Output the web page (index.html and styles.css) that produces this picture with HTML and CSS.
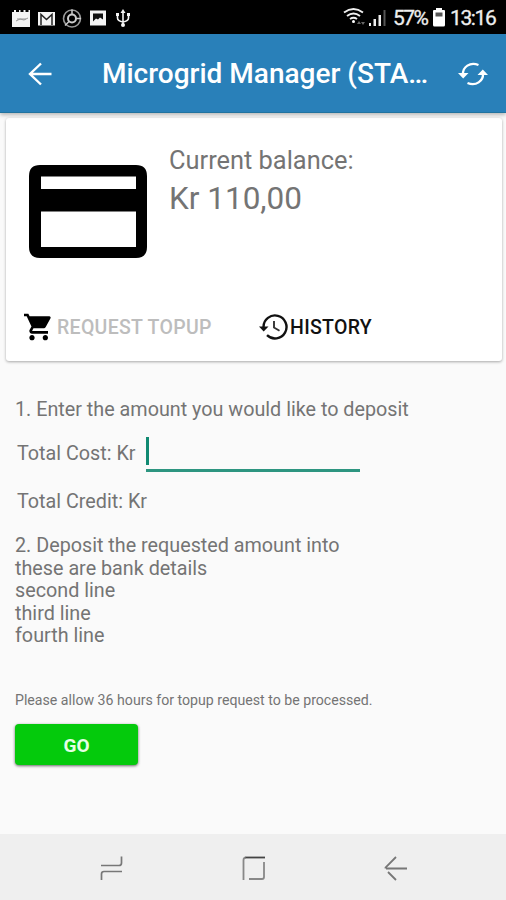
FILE: index.html
```html
<!DOCTYPE html>
<html lang="en">
<head>
<meta charset="utf-8">
<title>Microgrid Manager</title>
<link rel="stylesheet" href="styles.css">
</head>
<body>
<div class="screen">
  <div class="status">
    <svg class="notifications" width="130" height="34" viewBox="0 0 130 34" fill="none">
      <path fill="#f4f4f4" d="M12 11h2V9h2v2h3V9h1.500v2h3V9h2v2h3V9h1.500v17H12z"/>
      <path stroke="#999" d="M16 20l4-2 4 1 4-2M17 18h9"/>
      <path fill="#f4f4f4" d="M38 11h17v13.500H38z"/>
      <path stroke="#222" stroke-width="1.500" d="M41 24V13.500l5.500 5 5.500-5V24"/>
      <circle cx="72" cy="17.500" r="8.500" stroke="#999" stroke-width="1.600"/>
      <circle cx="72" cy="17.500" r="4" stroke="#ccc" stroke-width="2"/>
      <path stroke="#ccc" stroke-width="1.500" d="M72 8.500v5M76 17.500h5M69 20.500l-4 4"/>
      <path fill="#f4f4f4" d="M90 9.500h16v15H90z"/>
      <path fill="#111" d="M93 12.500h10v6l-3-2-2 2-2-1-3 3z"/>
      <path stroke="#f4f4f4" stroke-width="1.600" d="M123 10v14M117.500 14v3q0 3 5.500 4 5.500-1 5.500-4v-3"/>
      <path fill="#f4f4f4" d="M123 8l2.500 4h-5zM116 12h3v3h-3zM127 12h3v3h-3z"/><circle cx="123" cy="24" r="2" fill="#f4f4f4"/>
    </svg>
    <svg class="signals" width="46" height="34" viewBox="0 0 46 34" fill="none">
      <g stroke="#f0f0f0" stroke-width="1.900"><path d="M2 11.500q9.500-7 19 0M5 15q6.500-5 13 0M8 18q3.500-2.500 7 0"/></g>
      <circle cx="11.500" cy="20.500" r="1.500" fill="#fff"/>
      <path fill="#666" d="M15 23l2-3 2 3zM19 21l2 3 2-3z"/>
      <path fill="#eee" d="M27 22h2v3h-2zM31.500 18h2.500v7h-2.500zM36.500 14h2.500v11h-2.500z"/><path fill="#555" d="M41.500 9h2v16h-2z"/>
    </svg>
    <span class="percent">57%</span>
    <svg class="battery" width="12" height="34" viewBox="0 0 12 34"><path fill="#fff" d="M3 7h6v2h2q1 0 1 1v14q0 1.500-1.500 1.500h-9Q0 25.500 0 24V10q0-1 1-1h2z"/><path fill="#555" d="M2.500 11.500h7v4h-7z"/></svg>
    <span class="clock">13:16</span>
  </div>
  <header class="appbar">
    <svg class="back" width="24" height="24" viewBox="0 0 24 24" fill="none" stroke="#fff" stroke-width="2.400"><path d="M23.500 12H2M13 1.500L2 12l11 10.500"/></svg>
    <h1 class="title">Microgrid Manager (STA…</h1>
    <svg class="sync" width="30" height="26" viewBox="0 0 30 26" fill="none"><g stroke="#fff" stroke-width="2.300"><path d="M5 13.500C4.500 6 12 .5 20.500 4M25 12.500c.5 7.500-7 13-15.500 9.500"/></g><path fill="#fff" d="M0 12h10.500L5.200 17.500zM19.500 14h10.500L24.800 8.500z"/></svg>
  </header>
  <main class="content">
    <section class="card">
      <div class="summary">
        <svg class="credit" width="118" height="94" viewBox="0 0 118 94"><path fill-rule="evenodd" d="M11 0h96q11 0 11 11v71q0 11-11 11H11Q0 93 0 82V11Q0 0 11 0zM12 11.500V24h95V11.500zM12 46.500V82h95V46.500z"/></svg>
        <div class="balance"><div class="label">Current balance:</div><div class="amount">Kr 110,00</div></div>
      </div>
      <div class="actions">
        <div class="action topup"><svg width="28" height="28" viewBox="1 2 21 20"><path d="M7 18c-1.100 0-1.990.9-1.990 2S5.900 22 7 22s2-.9 2-2-.9-2-2-2zM1 2v2h2l3.600 7.590-1.350 2.450c-.16.280-.25.610-.25.960 0 1.100.9 2 2 2h12v-2H7.420c-.14 0-.25-.11-.25-.25l.03-.12.9-1.630h7.450c.75 0 1.410-.41 1.750-1.030l3.580-6.490A1 1 0 0 0 20 4H5.210l-.94-2H1zm16 16c-1.100 0-1.990.9-1.990 2s.89 2 1.990 2 2-.9 2-2-.9-2-2-2z"/></svg><span>REQUEST TOPUP</span></div>
        <div class="action history"><svg width="29" height="26" viewBox="0 0 29 26" fill="none" stroke="#111"><path stroke-width="2.400" d="M4.500 13A11.500 11.500 0 1 1 8 21.200"/><path fill="#111" stroke="none" d="M0 12.500h9.500l-4.800 5z"/><path stroke="#333" stroke-width="1.900" d="M15 7v6.500l5.500 3.200"/></svg><span>HISTORY</span></div>
      </div>
    </section>
    <section class="form">
      <p class="step">1. Enter the amount you would like to deposit</p>
      <div class="cost"><span>Total Cost: Kr</span><div class="field"><i class="caret"></i></div></div>
      <p class="total">Total Credit: Kr</p>
      <div class="details"><div>2. Deposit the requested amount into</div><div>these are bank details</div><div>second line</div><div>third line</div><div>fourth line</div></div>
      <p class="note">Please allow 36 hours for topup request to be processed.</p>
      <button class="go">GO</button>
    </section>
  </main>
  <nav class="nav">
    <svg width="24" height="26" viewBox="0 0 24 26" fill="none" stroke="#777" stroke-width="1.700"><path d="M1 10.500h18q2.500 0 2.500-2.500V1.500M22 16.500H4Q1.500 16.500 1.500 19v6"/></svg>
    <svg width="24" height="26" viewBox="0 0 24 26" fill="none" stroke="#888" stroke-width="1.800"><path d="M1.500 25V5q0-2.500 2.500-2.500M22 7v15q0 2-2 2H7"/><path stroke="#444" d="M3.500 2.500H23"/></svg>
    <svg width="24" height="26" viewBox="0 0 24 26" fill="none" stroke="#777" stroke-width="1.800"><path d="M23 13.500H2M12 2L1.500 12.500v1M4 17l8 8"/></svg>
  </nav>
</div>
</body>
</html>
```
FILE: styles.css
```css
* { box-sizing: border-box; }
body { margin: 0; font-family: Roboto, "Liberation Sans", sans-serif; color: #747474; }
h1, p { margin: 0; font-weight: 400; }
svg { display: block; flex: none; }
.screen { width: 506px; height: 900px; display: flex; flex-direction: column; background: #fafafa; overflow: hidden; white-space: nowrap; }
.status { height: 34px; flex: none; display: flex; align-items: center; background: #000; color: #eee; font-size: 21px; line-height: 34px; padding-top: 1px; }
.signals { margin-left: 212px; }
.percent { width: 33px; margin-left: 5px; letter-spacing: -1.600px; -webkit-text-stroke: .3px #eee; }
.battery { margin-left: 7px; }
.clock { margin-left: 5px; letter-spacing: -1.400px; -webkit-text-stroke: .3px #eee; }
.appbar { height: 79px; flex: none; display: flex; align-items: center; padding: 2px 0 0 28px; background: #2980b9; border-bottom: 1px solid #21739f; box-shadow: 0 2px 4px #0004; z-index: 1; color: #fff; }
.title { width: 330px; margin-left: 50px; font-size: 28px; font-weight: 500; line-height: 34px; }
.sync { margin-left: 26px; }
.content { flex: 1; padding: 5px 4px 0 6px; }
.card { height: 243px; background: #fff; border-radius: 3px; box-shadow: 0 1px 3px #0005; padding: 25px 18px 0; }
.summary { height: 169px; display: flex; }
.credit { margin: 22px 0 0 5px; }
.balance { margin-left: 22px; }
.label { font-size: 25.400px; line-height: 34px; }
.amount { font-size: 31.500px; line-height: 43px; }
.actions { display: flex; height: 30px; font-size: 19.500px; font-weight: 500; }
.action { display: flex; align-items: center; }
.topup { width: 235px; color: #bdbdbd; gap: 5px; letter-spacing: .300px; }
.history { color: #111; gap: 2px; letter-spacing: .300px; }
.form { padding: 37px 9px 0; font-size: 19.750px; line-height: 24px; }
.cost { display: flex; height: 38px; margin: 13px 0 0 2px; align-items: center; }
.field { width: 214px; height: 35px; margin: 0 0 0 10px; border-bottom: 3px solid #2d9580; }
.caret { display: block; width: 3px; height: 28px; background: #118a72; }
.total { margin: 17px 0 0 2px; }
.details { margin-top: 21px; line-height: 22.500px; }
.note { margin-top: 42px; font-size: 14.150px; line-height: 20px; }
.go { display: block; margin-top: 14px; padding: 2px 0 0; width: 123px; height: 41px; border: 0; border-radius: 4px; background: #04ca0c; box-shadow: 0 1px 3px #0009; color: #e5ffe5; font: 700 19px Roboto, sans-serif; }
.nav { flex: none; height: 66px; background: #efefef; display: flex; align-items: center; padding: 2px 0 0 100px; gap: 118px; }
```
